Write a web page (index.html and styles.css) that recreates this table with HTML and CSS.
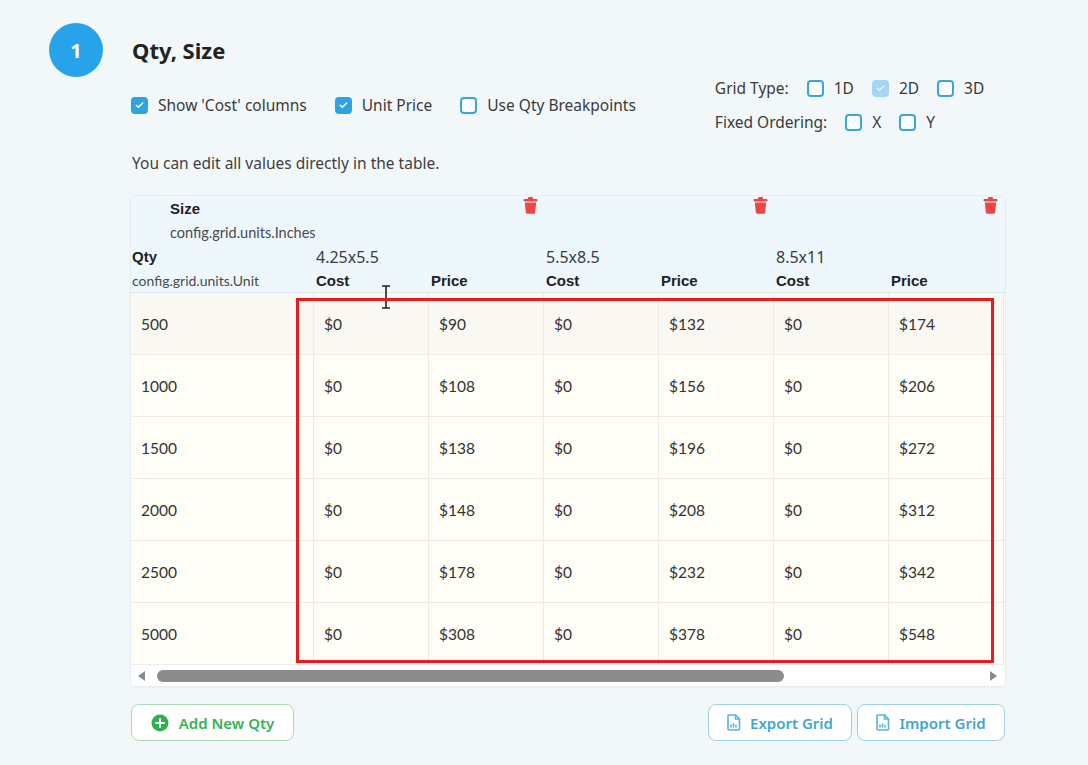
FILE: index.html
```html
<!DOCTYPE html>
<html lang="en">
<head>
<meta charset="utf-8">
<title>Qty, Size</title>
<link rel="stylesheet" href="styles.css">
</head>
<body>
<div class="page">
  <header class="title-row">
    <div class="step">1</div>
    <h1 class="title">Qty, Size</h1>
  </header>

  <div class="content">
    <div class="options">
      <div class="opts-left">
        <label class="chk"><span class="box on"><svg viewBox="0 0 16 16"><path d="M4 8.3l2.6 2.6L12 5.5"/></svg></span>Show 'Cost' columns</label>
        <label class="chk"><span class="box on"><svg viewBox="0 0 16 16"><path d="M4 8.3l2.6 2.6L12 5.5"/></svg></span>Unit Price</label>
        <label class="chk"><span class="box"></span>Use Qty Breakpoints</label>
      </div>
      <div class="opts-right">
        <div class="orow">
          <span class="olabel">Grid Type:</span>
          <label class="chk"><span class="box"></span>1D</label>
          <label class="chk"><span class="box dis"><svg viewBox="0 0 16 16"><path d="M4 8.3l2.6 2.6L12 5.5"/></svg></span>2D</label>
          <label class="chk"><span class="box"></span>3D</label>
        </div>
        <div class="orow">
          <span class="olabel">Fixed Ordering:</span>
          <label class="chk"><span class="box"></span>X</label>
          <label class="chk"><span class="box"></span>Y</label>
        </div>
      </div>
    </div>

    <p class="hint">You can edit all values directly in the table.</p>

    <div class="table-wrap">
      <div class="table">
        <div class="thead">
          <div class="h-size">Size</div>
          <div class="h-trash g1"><svg class="trash" viewBox="0 0 14 17"><rect x="4.5" y="0" width="5" height="2.6" rx="1"/><rect x="0" y="2" width="14" height="2.6" rx="1"/><path d="M1.3 5.6h11.4l-1 9.6a1.8 1.8 0 0 1-1.8 1.6H4.1a1.8 1.8 0 0 1-1.8-1.6z"/></svg></div>
          <div class="h-trash g2"><svg class="trash" viewBox="0 0 14 17"><rect x="4.5" y="0" width="5" height="2.6" rx="1"/><rect x="0" y="2" width="14" height="2.6" rx="1"/><path d="M1.3 5.6h11.4l-1 9.6a1.8 1.8 0 0 1-1.8 1.6H4.1a1.8 1.8 0 0 1-1.8-1.6z"/></svg></div>
          <div class="h-trash g3"><svg class="trash" viewBox="0 0 14 17"><rect x="4.5" y="0" width="5" height="2.6" rx="1"/><rect x="0" y="2" width="14" height="2.6" rx="1"/><path d="M1.3 5.6h11.4l-1 9.6a1.8 1.8 0 0 1-1.8 1.6H4.1a1.8 1.8 0 0 1-1.8-1.6z"/></svg></div>

          <div class="h-units h-inches">config.grid.units.Inches</div>

          <div class="h-qty">Qty</div>
          <div class="h-dim g1">4.25x5.5</div>
          <div class="h-dim g2">5.5x8.5</div>
          <div class="h-dim g3">8.5x11</div>

          <div class="h-units">config.grid.units.Unit</div>
          <div class="h-col">Cost</div>
          <div class="h-col">Price</div>
          <div class="h-col">Cost</div>
          <div class="h-col">Price</div>
          <div class="h-col">Cost</div>
          <div class="h-col">Price</div>
        </div>

        <div class="tbody">
          <div class="trow first"><div class="td">500</div><div class="td">$0</div><div class="td">$90</div><div class="td">$0</div><div class="td">$132</div><div class="td">$0</div><div class="td">$174</div></div>
          <div class="trow"><div class="td">1000</div><div class="td">$0</div><div class="td">$108</div><div class="td">$0</div><div class="td">$156</div><div class="td">$0</div><div class="td">$206</div></div>
          <div class="trow"><div class="td">1500</div><div class="td">$0</div><div class="td">$138</div><div class="td">$0</div><div class="td">$196</div><div class="td">$0</div><div class="td">$272</div></div>
          <div class="trow"><div class="td">2000</div><div class="td">$0</div><div class="td">$148</div><div class="td">$0</div><div class="td">$208</div><div class="td">$0</div><div class="td">$312</div></div>
          <div class="trow"><div class="td">2500</div><div class="td">$0</div><div class="td">$178</div><div class="td">$0</div><div class="td">$232</div><div class="td">$0</div><div class="td">$342</div></div>
          <div class="trow"><div class="td">5000</div><div class="td">$0</div><div class="td">$308</div><div class="td">$0</div><div class="td">$378</div><div class="td">$0</div><div class="td">$548</div></div>
        </div>

        <div class="scrollbar">
          <svg class="arrow" viewBox="0 0 10 12"><path d="M8 1v10L1 6z"/></svg>
          <div class="track"><div class="thumb"></div></div>
          <svg class="arrow" viewBox="0 0 10 12"><path d="M2 1v10l7-5z"/></svg>
        </div>
      </div>

      <svg class="ibeam" viewBox="0 0 12 24"><path d="M2 1h8M6 1v22M2 23h8"/></svg>
      <div class="highlight"></div>
    </div>

    <div class="actions">
      <button class="btn btn-green">
        <svg class="ico" viewBox="0 0 18 18"><circle cx="9" cy="9" r="8.5"/><path class="plus" d="M9 5v8M5 9h8"/></svg>
        Add New Qty
      </button>
      <div class="actions-right">
        <button class="btn btn-blue">
          <svg class="ico file" viewBox="0 0 14 17"><path d="M2 1h6.5L12.5 5v10a1 1 0 0 1-1 1H2a1 1 0 0 1-1-1V2a1 1 0 0 1 1-1z"/><path d="M8.5 1v4h4"/><path d="M4 13v-2M6.5 13v-3M9 13v-1.5"/></svg>
          Export Grid
        </button>
        <button class="btn btn-blue">
          <svg class="ico file" viewBox="0 0 14 17"><path d="M2 1h6.5L12.5 5v10a1 1 0 0 1-1 1H2a1 1 0 0 1-1-1V2a1 1 0 0 1 1-1z"/><path d="M8.5 1v4h4"/><path d="M4 13v-2M6.5 13v-3M9 13v-1.5"/></svg>
          Import Grid
        </button>
      </div>
    </div>
  </div>
</div>
</body>
</html>
```

FILE: styles.css
```css
* { box-sizing: border-box; }

html, body {
  margin: 0;
  padding: 0;
  background: #f2f7f9;
}

body {
  font-family: "Noto Sans", "Open Sans", sans-serif;
  color: #3b3b3b;
  width: 1088px;
  height: 765px;
  overflow: hidden;
}

.page {
  padding: 23px 0 0 49px;
}

.title-row {
  display: flex;
  align-items: center;
  gap: 29px;
  height: 54px;
}

.step {
  width: 54px;
  height: 54px;
  border-radius: 50%;
  background: #28a3ea;
  color: #fff;
  display: flex;
  align-items: center;
  justify-content: center;
  font-weight: 700;
  font-size: 20px;
}

.title {
  margin: 0;
  font-size: 22px;
  font-weight: 700;
  color: #222;
}

.content {
  margin-left: 82px;
  width: 874px;
}

/* options */
.options {
  display: flex;
  align-items: center;
  gap: 79px;
  margin-top: -1px;
}

.opts-left {
  display: flex;
  align-items: center;
  gap: 28px;
}

.opts-right {
  display: flex;
  flex-direction: column;
  gap: 10px;
}

.orow {
  display: flex;
  align-items: center;
  height: 24px;
  gap: 18px;
}

.olabel {
  font-size: 15.5px;
  color: #3b3b3b;
}

.chk {
  display: flex;
  align-items: center;
  gap: 10px;
  font-size: 15.5px;
  color: #3b3b3b;
  white-space: nowrap;
}

.box {
  width: 17px;
  height: 17px;
  border-radius: 4px;
  border: 2px solid #3aa5d9;
  background: #fbfdfe;
  display: flex;
  align-items: center;
  justify-content: center;
  flex: none;
}

.box svg {
  width: 14px;
  height: 14px;
  fill: none;
  stroke: #fff;
  stroke-width: 1.8;
  stroke-linecap: round;
  stroke-linejoin: round;
}

.box.on {
  background: #2ea3e2;
  border-color: #2ea3e2;
}

.box.dis {
  background: #a4d6f1;
  border-color: #a4d6f1;
}

.box.dis svg { stroke: #e6f4fb; }

.hint {
  margin: 19px 0 0 1px;
  font-size: 15.5px;
  line-height: 20px;
  color: #3f3f3f;
}

/* table */
.table-wrap {
  position: relative;
  margin-top: 23px;
}

.table {
  width: 874px;
  border-radius: 4px;
  overflow: hidden;
  background: #fff;
  box-shadow: 0 0 0 1px #e4eef2, 0 1px 3px rgba(0, 0, 0, 0.06);
}

.thead {
  display: grid;
  grid-template-columns: 183px repeat(6, 115px);
  grid-template-rows: 24px 25px 23px 24px;
  background: #eef8fc;
  border-bottom: 1px solid #d9ebf2;
  align-items: center;
}

.h-size {
  grid-column: 1;
  padding-left: 39px;
  font-family: "Liberation Sans", Arial, sans-serif;
  font-weight: 700;
  font-size: 15px;
  color: #222;
}

.h-trash {
  display: flex;
  justify-content: flex-end;
  padding-right: 6px;
  padding-bottom: 6px;
}

.h-trash.g1, .h-dim.g1 { grid-column: 2 / span 2; }
.h-trash.g2, .h-dim.g2 { grid-column: 4 / span 2; }
.h-trash.g3, .h-dim.g3 { grid-column: 6 / span 2; }

.trash {
  width: 15px;
  height: 17px;
  fill: #f04545;
}

.h-units {
  font-family: "Lato", "Noto Sans", sans-serif;
  font-size: 14px;
  color: #4a4a4a;
  grid-column: 1;
  white-space: nowrap;
  padding-left: 1px;
}

.h-inches {
  grid-column: 1 / -1;
  padding-left: 39px;
  font-size: 14.5px;
}

.h-qty {
  grid-column: 1;
  padding-left: 1px;
  font-family: "Liberation Sans", Arial, sans-serif;
  font-weight: 700;
  font-size: 15px;
  color: #222;
}

.h-dim {
  padding-left: 2px;
  font-size: 16px;
  color: #3b3b3b;
}

.h-col {
  padding-left: 2px;
  font-family: "Liberation Sans", Arial, sans-serif;
  font-weight: 700;
  font-size: 15px;
  color: #222;
}

.trow {
  display: grid;
  grid-template-columns: 183px repeat(6, 115px);
  height: 62px;
  background: #fefdf6;
  border-bottom: 1px solid #ecebe4;
}

.trow.first { background: #faf8f2; }
.trow:last-child { border-bottom: none; height: 61px; }

.td {
  display: flex;
  align-items: center;
  padding-left: 10px;
  font-family: "Lato", "Noto Sans", sans-serif;
  font-size: 15.5px;
  color: #333;
  border-right: 1px solid #ecebe4;
}

.scrollbar {
  display: flex;
  align-items: center;
  height: 22px;
  background: #fff;
  border-top: 1px solid #eeeeee;
  padding: 0 7px 0 6px;
}

.arrow {
  width: 10px;
  height: 12px;
  fill: #8a8a8a;
  flex: none;
}

.track {
  flex: 1;
  padding: 0 5px 0 10px;
}

.thumb {
  width: 627px;
  height: 12px;
  border-radius: 6px;
  background: #8c8c8c;
}

.ibeam {
  position: absolute;
  left: 249px;
  top: 89px;
  width: 12px;
  height: 24px;
  fill: none;
  stroke: #222;
  stroke-width: 1.6;
}

.highlight {
  position: absolute;
  left: 165px;
  top: 102px;
  width: 698px;
  height: 365px;
  border: 3px solid #e81b23;
  pointer-events: none;
}

/* actions */
.actions {
  display: flex;
  justify-content: space-between;
  margin-top: 18px;
}

.actions-right {
  display: flex;
  gap: 5px;
}

.btn {
  height: 37px;
  border-radius: 8px;
  background: #fff;
  display: flex;
  align-items: center;
  justify-content: center;
  gap: 9px;
  font-family: "Noto Sans", sans-serif;
  font-size: 15px;
  font-weight: 600;
  cursor: pointer;
}

.btn-green {
  width: 163px;
  border: 1.5px solid #a9dbb6;
  color: #33b255;
  gap: 10px;
}

.btn-green .ico {
  width: 18px;
  height: 18px;
}

.btn-green .ico circle { fill: #30b150; }
.btn-green .ico .plus {
  stroke: #fff;
  stroke-width: 2;
  stroke-linecap: round;
}

.btn-blue {
  border: 1.5px solid #9fcfe2;
  color: #3ea6d3;
  width: 144px;
}

.btn-blue + .btn-blue { width: 148px; }

.btn .file {
  width: 14px;
  height: 17px;
  fill: none;
  stroke: #59b3db;
  stroke-width: 1.6;
  stroke-linejoin: round;
  stroke-linecap: round;
}
```
